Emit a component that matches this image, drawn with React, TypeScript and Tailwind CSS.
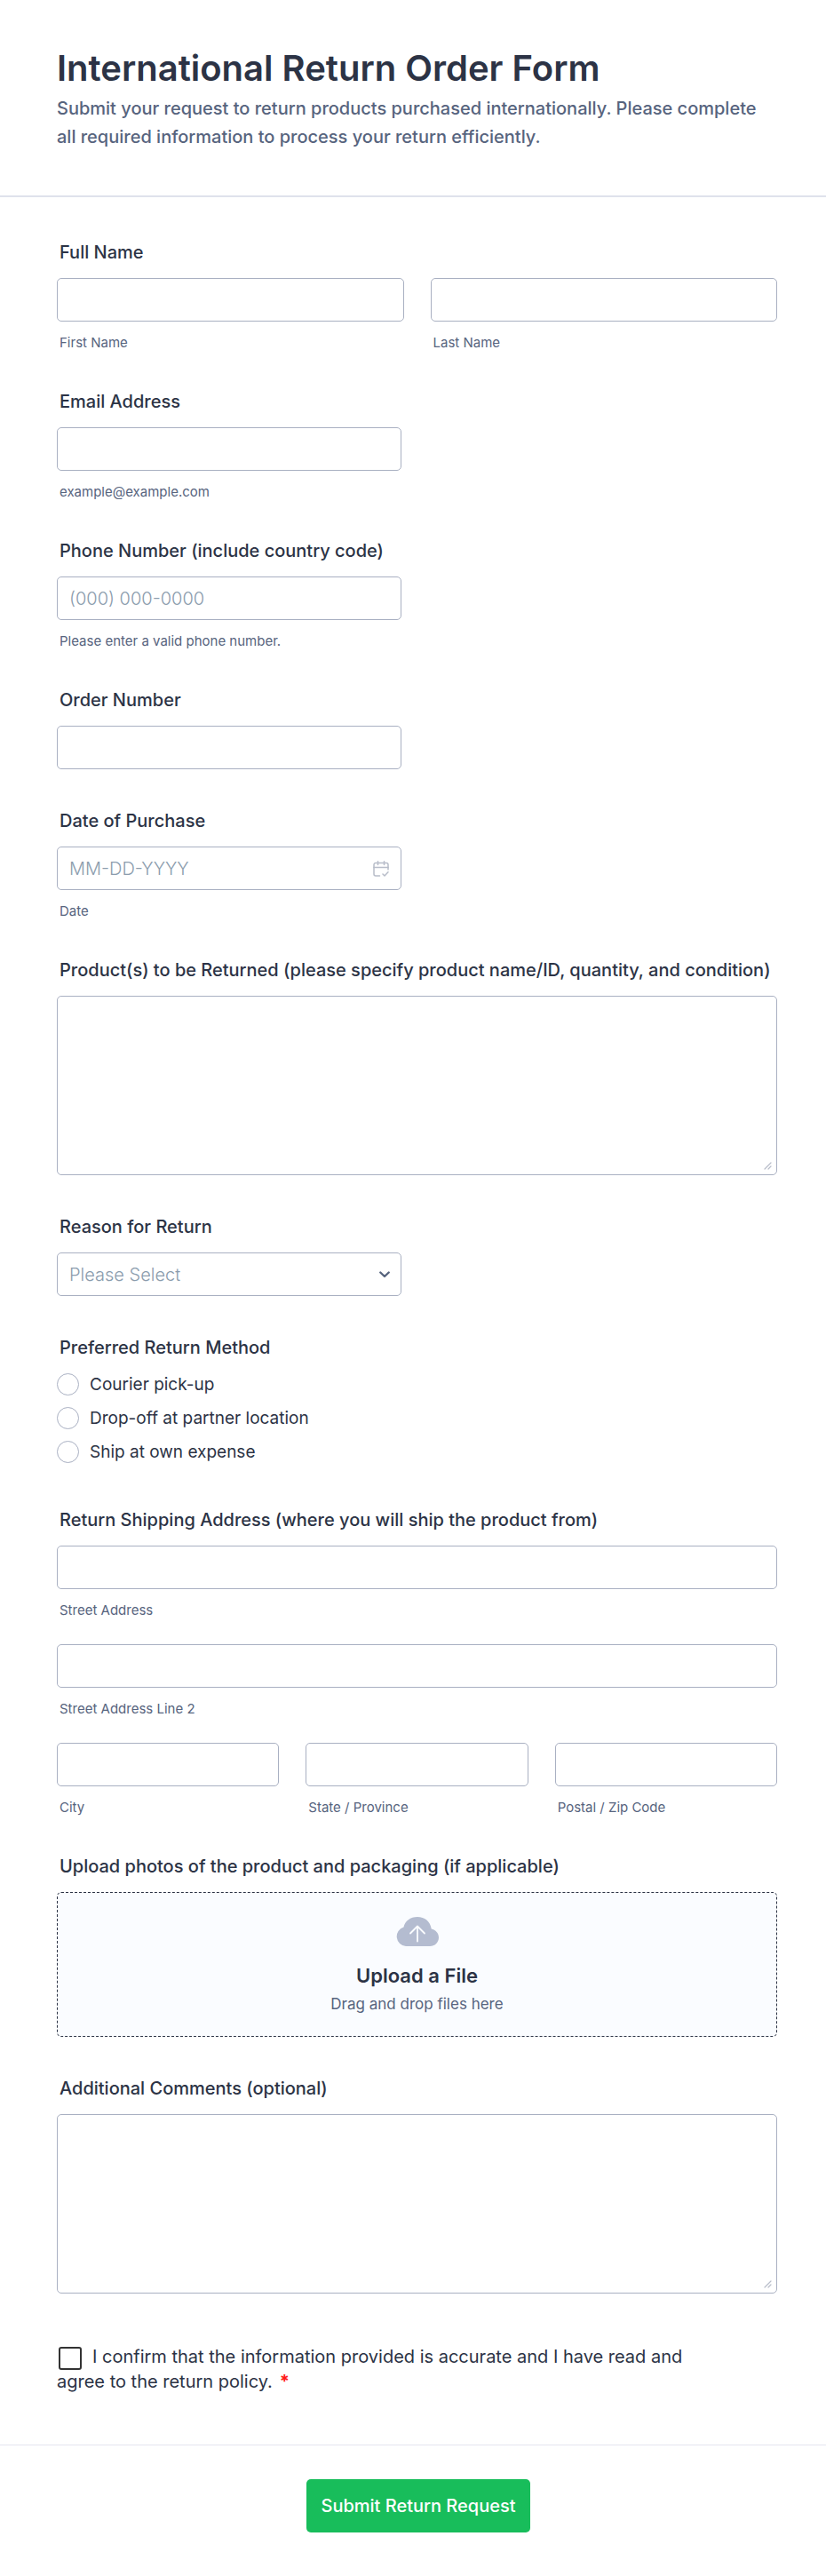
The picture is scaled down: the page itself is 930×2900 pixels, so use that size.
import { useState } from 'react'
import type { ReactNode } from 'react'
import clsx from 'clsx'

const inputBase =
  'block h-[49px] w-full rounded-[5px] border border-[#a9b0c2] bg-white px-[13px] text-[20px] text-[#2c3345] placeholder:font-light placeholder:text-[#8b9cad] placeholder:opacity-100'

const returnMethods = ['Courier pick-up', 'Drop-off at partner location', 'Ship at own expense']

const returnReasons = ['Damaged item', 'Wrong item received', 'No longer needed', 'Other']

interface FieldProps {
  label: string
  htmlFor: string
  children: ReactNode
}

function Field({ label, htmlFor, children }: FieldProps) {
  return (
    <div>
      <label htmlFor={htmlFor} className="mb-[17px] block px-[3px] text-[20px] leading-6 font-medium">
        {label}
      </label>
      {children}
    </div>
  )
}

interface GroupProps {
  label: string
  children: ReactNode
}

function Group({ label, children }: GroupProps) {
  return (
    <fieldset>
      <legend className="mb-[17px] px-[3px] text-[20px] leading-6 font-medium">{label}</legend>
      {children}
    </fieldset>
  )
}

interface SubInputProps {
  id: string
  label: string
}

function SubInput({ id, label }: SubInputProps) {
  return (
    <div className="min-w-0">
      <input id={id} name={id} type="text" className={inputBase} />
      <label htmlFor={id} className="mt-4 block px-[3px] text-[15px] leading-4 text-[#57647e]">
        {label}
      </label>
    </div>
  )
}

function Hint({ children }: { children: ReactNode }) {
  return <p className="mt-4 px-[3px] text-[15px] leading-4 text-[#57647e]">{children}</p>
}

function CalendarIcon() {
  return (
    <svg
      viewBox="0 0 18 18"
      className="pointer-events-none absolute top-4 right-[14px] h-[18px] w-[18px]"
      fill="none"
      stroke="#b8bdc9"
      strokeWidth="1.5"
      strokeLinecap="round"
      strokeLinejoin="round"
    >
      <path d="M7.500 17H3A2 2 0 0 1 1 15V4.500A2 2 0 0 1 3 2.500H15A2 2 0 0 1 17 4.500V10" />
      <path d="M1 7.500H17M5.500 0.800V4.500M12.500 0.800V4.500M11 15L13 17L17 12.800" />
    </svg>
  )
}

function TextArea({ id }: { id: string }) {
  return (
    <div className="relative">
      <textarea
        id={id}
        name={id}
        className="block h-[202px] w-full resize-none rounded-[5px] border border-[#a9b0c2] bg-white px-[13px] py-3 text-[20px] text-[#2c3345]"
      />
      <svg
        viewBox="0 0 9 9"
        className="pointer-events-none absolute right-[6px] bottom-[6px] h-[9px] w-[9px]"
        stroke="#b8bdc9"
        strokeWidth="1.2"
        strokeLinecap="round"
      >
        <path d="M1 8L8 1M5 8L8 5" />
      </svg>
    </div>
  )
}

export default function App() {
  const [reason, setReason] = useState('')
  const [method, setMethod] = useState('')

  return (
    <main className="min-h-screen bg-white font-['Inter',sans-serif] text-[#2c3345]">
      <form onSubmit={(e) => e.preventDefault()}>
        {/* Header */}
        <header className="border-b-2 border-[#dfe2ec] pt-[52px] pr-[55px] pb-[50px] pl-16">
          <h1 className="text-[40px] leading-[50px] font-semibold">International Return Order Form</h1>
          <p className="mt-1 text-[20px] leading-8 font-medium text-[#57647e]">
            Submit your request to return products purchased internationally. Please complete all required
            information to process your return efficiently.
          </p>
        </header>

        {/* Fields */}
        <div className="flex flex-col gap-[46px] pt-[50px] pr-[55px] pb-[57px] pl-16">
          <Group label="Full Name">
            <div className="grid grid-cols-2 gap-[30px]">
              <SubInput id="firstName" label="First Name" />
              <SubInput id="lastName" label="Last Name" />
            </div>
          </Group>

          <Field label="Email Address" htmlFor="email">
            <div className="max-w-[388px]">
              <input id="email" name="email" type="email" className={inputBase} />
            </div>
            <Hint>example@example.com</Hint>
          </Field>

          <Field label="Phone Number (include country code)" htmlFor="phone">
            <div className="max-w-[388px]">
              <input id="phone" name="phone" type="tel" placeholder="(000) 000-0000" className={inputBase} />
            </div>
            <Hint>Please enter a valid phone number.</Hint>
          </Field>

          <Field label="Order Number" htmlFor="orderNumber">
            <div className="max-w-[388px]">
              <input id="orderNumber" name="orderNumber" type="text" className={inputBase} />
            </div>
          </Field>

          <Field label="Date of Purchase" htmlFor="purchaseDate">
            <div className="relative max-w-[388px]">
              <input
                id="purchaseDate"
                name="purchaseDate"
                type="text"
                placeholder="MM-DD-YYYY"
                className={inputBase}
              />
              <CalendarIcon />
            </div>
            <Hint>Date</Hint>
          </Field>

          <Field
            label="Product(s) to be Returned (please specify product name/ID, quantity, and condition)"
            htmlFor="products"
          >
            <TextArea id="products" />
          </Field>

          <Field label="Reason for Return" htmlFor="reason">
            <div className="relative max-w-[388px]">
              <select
                id="reason"
                name="reason"
                value={reason}
                onChange={(e) => setReason(e.target.value)}
                className={clsx(inputBase, 'appearance-none', !reason && 'font-light text-[#8b9cad]')}
              >
                <option value="">Please Select</option>
                {returnReasons.map((r) => (
                  <option key={r} value={r}>
                    {r}
                  </option>
                ))}
              </select>
              <svg
                viewBox="0 0 12 8"
                className="pointer-events-none absolute top-[21px] right-[13px] h-2 w-3"
                fill="none"
                stroke="#57647e"
                strokeWidth="2.400"
                strokeLinecap="round"
                strokeLinejoin="round"
              >
                <path d="M1.300 1.500L6 6L10.700 1.500" />
              </svg>
            </div>
          </Field>

          <Group label="Preferred Return Method">
            <div className="flex flex-col gap-[13px] pb-[6px]">
              {returnMethods.map((m) => (
                <label key={m} className="flex items-center gap-3 text-[19px] leading-[25px]">
                  <input
                    type="radio"
                    name="returnMethod"
                    value={m}
                    checked={method === m}
                    onChange={() => setMethod(m)}
                    className="h-[25px] w-[25px] shrink-0 appearance-none rounded-full border border-[#a9b0c2] bg-white checked:border-8 checked:border-[#57647e]"
                  />
                  {m}
                </label>
              ))}
            </div>
          </Group>

          <Group label="Return Shipping Address (where you will ship the product from)">
            <div className="flex flex-col gap-[30px]">
              <SubInput id="street" label="Street Address" />
              <SubInput id="street2" label="Street Address Line 2" />
              <div className="grid grid-cols-3 gap-[30px]">
                <SubInput id="city" label="City" />
                <SubInput id="state" label="State / Province" />
                <SubInput id="zip" label="Postal / Zip Code" />
              </div>
            </div>
          </Group>

          <Field label="Upload photos of the product and packaging (if applicable)" htmlFor="photos">
            <label
              htmlFor="photos"
              className="flex cursor-pointer flex-col items-center rounded-[5px] border border-dashed border-[#2c3345] bg-[#fafcff] pt-[27px] pb-6"
            >
              <svg viewBox="0 0 48 33" className="h-[33px] w-12">
                <path
                  d="M11 33A11 11 0 0 1 8.500 11.500C10 4.500 16 0 24 0C32 0 38.500 5 39.700 13.500C44.500 14.500 48 18.500 48 23.200C48 28.700 43.500 33 38 33Z"
                  fill="#b4bcd0"
                />
                <path
                  d="M24 27.500V10.500M16 18.500L24 10.500L32 18.500"
                  fill="none"
                  stroke="#fafcff"
                  strokeWidth="1.800"
                  strokeLinecap="round"
                  strokeLinejoin="round"
                />
              </svg>
              <span className="mt-[19px] text-[22px] leading-[28px] font-semibold">Upload a File</span>
              <span className="mt-[6px] text-[17px] leading-6 text-[#57647e]">Drag and drop files here</span>
            </label>
            <input id="photos" name="photos" type="file" multiple className="sr-only" />
          </Field>

          <Field label="Additional Comments (optional)" htmlFor="comments">
            <TextArea id="comments" />
          </Field>

          {/* Terms */}
          <div className="max-w-[720px] pt-3 text-[20px] leading-[27px]">
            <input
              id="terms"
              name="terms"
              type="checkbox"
              required
              className="mr-3 ml-[2px] inline-block h-[26px] w-[26px] appearance-none rounded-[3px] border-2 border-[#333] bg-white align-middle checked:bg-[#2c3345]"
            />
            <label htmlFor="terms">
              I confirm that the information provided is accurate and I have read and agree to the return policy.
              <span className="ml-2 font-bold text-[#ff1a1a]">*</span>
            </label>
          </div>
        </div>

        {/* Submit */}
        <div className="flex justify-center border-t border-[#e3e5f0] pt-[38px] pr-[44px] pb-12 pl-14">
          <button
            type="submit"
            className="h-[60px] cursor-pointer rounded-[5px] bg-[#18bd5b] px-4 text-[20px] font-medium text-white"
          >
            Submit Return Request
          </button>
        </div>
      </form>
    </main>
  )
}
